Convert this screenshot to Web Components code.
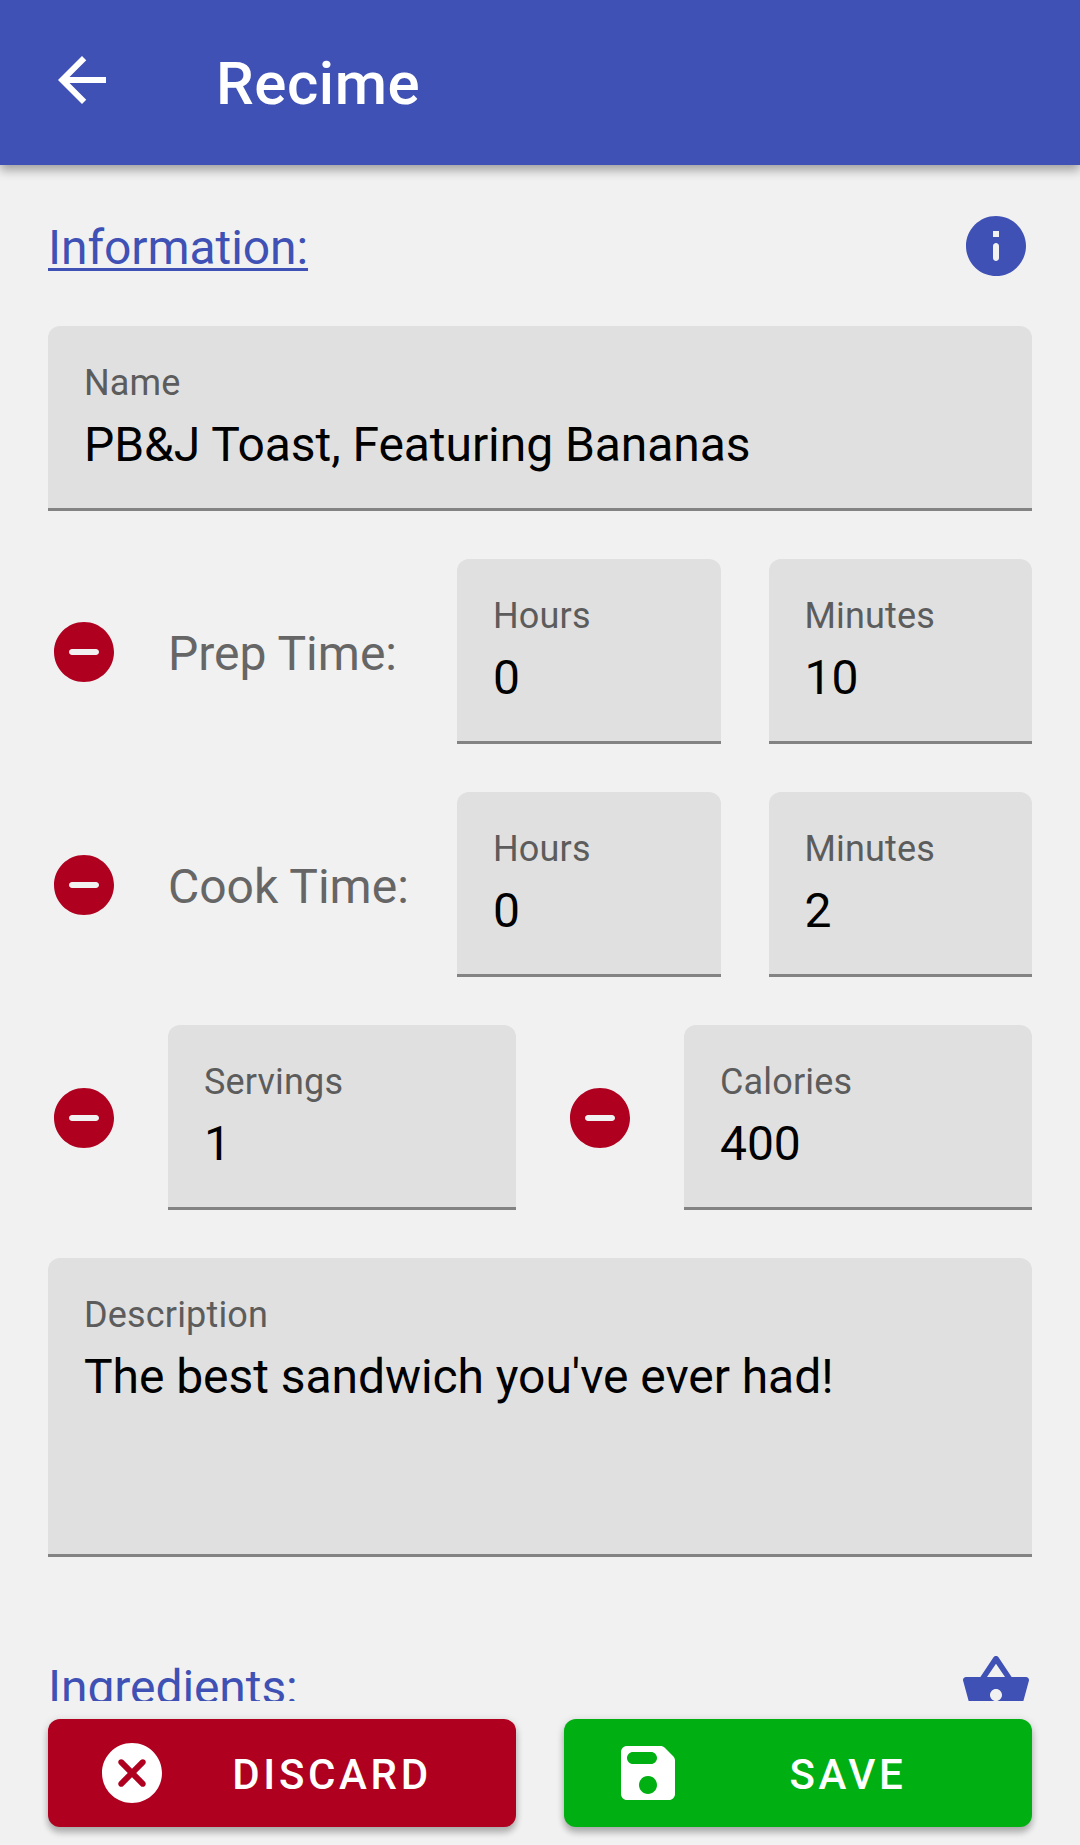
<!DOCTYPE html>
<html lang="en">
<head>
<meta charset="utf-8">
<title>Recime</title>
<style>
html,body{margin:0;height:100%}
body{font-family:Roboto,"Liberation Sans",sans-serif;background:#f1f1f1;overflow:hidden}
</style>
</head>
<body>
<recipe-editor></recipe-editor>
<script>
const define = (name, markup) => {
  const t = document.createElement('template');
  t.innerHTML = markup;
  customElements.define(name, class extends HTMLElement {
    constructor() {
      super();
      this.attachShadow({ mode: 'open' }).append(t.content.cloneNode(true));
    }
  });
};

const ICONS = {
  back: 'M20 11H7.83l5.59-5.59L12 4l-8 8 8 8 1.41-1.41L7.83 13H20v-2z',
  info: 'M12 2C6.48 2 2 6.48 2 12s4.48 10 10 10 10-4.48 10-10S17.52 2 12 2zm0 15c-.55 0-1-.45-1-1v-4c0-.55.45-1 1-1s1 .45 1 1v4c0 .55-.45 1-1 1zm1-8h-2V7h2v2z',
  minus: 'M12 2C6.48 2 2 6.48 2 12s4.48 10 10 10 10-4.48 10-10S17.52 2 12 2zm4 11H8c-.55 0-1-.45-1-1s.45-1 1-1h8c.55 0 1 .45 1 1s-.45 1-1 1z',
  cancel: 'M12 2C6.47 2 2 6.47 2 12s4.47 10 10 10 10-4.47 10-10S17.53 2 12 2zm4.3 14.3c-.39.39-1.02.39-1.41 0L12 13.41 9.11 16.3c-.39.39-1.02.39-1.41 0-.39-.39-.39-1.02 0-1.41L10.59 12 7.7 9.11c-.39-.39-.39-1.02 0-1.41.39-.39 1.02-.39 1.41 0L12 10.59l2.89-2.89c.39-.39 1.02-.39 1.41 0 .39.39.39 1.02 0 1.41L13.41 12l2.89 2.89c.38.38.38 1.02 0 1.41z',
  save: 'M17.59 3.59c-.38-.38-.89-.59-1.42-.59H5c-1.11 0-2 .9-2 2v14c0 1.1.9 2 2 2h14c1.1 0 2-.9 2-2V7.83c0-.53-.21-1.04-.59-1.41l-2.82-2.83zM12 19c-1.66 0-3-1.34-3-3s1.34-3 3-3 3 1.34 3 3-1.34 3-3 3zm1-10H7c-1.1 0-2-.9-2-2s.9-2 2-2h6c1.1 0 2 .9 2 2s-.9 2-2 2z',
  basket: 'M17.21 9l-4.38-6.56c-.19-.28-.51-.42-.83-.42-.32 0-.64.14-.83.43L6.79 9H2c-.55 0-1 .45-1 1 0 .09.01.18.04.27l2.54 9.27c.23.84 1 1.46 1.92 1.46h13c.92 0 1.69-.62 1.93-1.46l2.54-9.27L23 10c0-.55-.45-1-1-1h-4.79zM9 9l3-4.4L15 9H9zm3 8c-1.1 0-2-.9-2-2s.9-2 2-2 2 .9 2 2-.9 2-2 2z'
};

customElements.define('md-icon', class extends HTMLElement {
  constructor() {
    super();
    this.attachShadow({ mode: 'open' });
  }
  connectedCallback() {
    this.shadowRoot.innerHTML = `
      <style>:host{display:block;flex:none;width:72px;height:72px}svg{display:block}</style>
      <svg width="72" height="72" viewBox="0 0 24 24" fill="currentColor"><path d="${ICONS[this.getAttribute('name')]}"/></svg>`;
  }
});

define('app-bar', `
  <style>
    :host{display:flex;align-items:center;box-sizing:border-box;height:165px;flex:none;padding:0 46px 5px;gap:98px;
      background:#3f51b5;color:#fff;box-shadow:0 5px 10px rgba(0,0,0,.35);z-index:1}
    .title{font-size:60px;font-weight:500;line-height:70px;padding-top:7px;letter-spacing:.55px}
  </style>
  <md-icon name="back"></md-icon><div class="title"><slot></slot></div>`);

define('section-heading', `
  <style>
    :host{display:flex;justify-content:space-between;height:72px;color:#3f51b5}
    .text{font-size:48px;line-height:56px;padding-top:10px;letter-spacing:-.08px;text-decoration:underline;
      text-decoration-thickness:3px;text-underline-offset:4px;text-decoration-skip-ink:none}
  </style>
  <div class="text"><slot></slot></div><slot name="icon"></slot>`);

define('text-field', `
  <style>
    :host{display:flex;flex-direction:column;box-sizing:border-box;height:185px;min-width:0;flex:1;
      padding:36px 36px 0;background:#e0e0e0;border-bottom:3px solid #838383;border-radius:12px 12px 0 0;white-space:nowrap}
    .label{font-size:36px;line-height:42px;color:#5c5c5c;letter-spacing:.17px}
    .value{font-size:48px;line-height:56px;color:#000;margin-top:13px;letter-spacing:-.06px}
  </style>
  <div class="label"><slot name="label"></slot></div><div class="value"><slot></slot></div>`);

define('form-row', `
  <style>
    :host{display:flex;align-items:center;gap:48px}
    ::slotted(md-icon){color:#b00020}
  </style>
  <slot></slot>`);

define('row-label', `
  <style>
    :host{display:block;box-sizing:border-box;width:241px;flex:none;font-size:48px;line-height:56px;padding-top:4px;
      color:#666;white-space:nowrap}
  </style>
  <slot></slot>`);

define('action-button', `
  <style>
    :host{display:flex;align-items:center;box-sizing:border-box;flex:1;height:108px;padding:0 20px 0 48px;border-radius:12px;
      background:var(--fill);color:#fff;box-shadow:0 6px 6px rgba(0,0,0,.2),0 2px 8px rgba(0,0,0,.16)}
    .text{flex:1;text-align:center;font-size:42px;font-weight:500;line-height:50px;letter-spacing:3.65px;padding-top:4px}
  </style>
  <slot name="icon"></slot><div class="text"><slot></slot></div>`);

define('recipe-editor', `
  <style>
    :host{display:flex;flex-direction:column;height:1845px;width:1080px;background:#f1f1f1}
    main{flex:1;min-height:0;overflow:hidden;padding:45px 48px 0;box-sizing:border-box;display:flex;flex-direction:column}
    main > *{flex:none}
    .form{display:flex;flex-direction:column;gap:48px;padding:44px 0 93px}
    .form > text-field{flex:none}
    .form > .tall{height:299px}
    footer{display:flex;gap:48px;flex:none;height:144px;box-sizing:border-box;padding:18px 48px}
  </style>
  <app-bar>Recime</app-bar>
  <main>
    <section-heading>Information:<md-icon slot="icon" name="info"></md-icon></section-heading>
    <div class="form">
      <text-field><span slot="label">Name</span>PB&amp;J Toast, Featuring Bananas</text-field>
      <form-row>
        <md-icon name="minus"></md-icon><row-label>Prep Time:</row-label>
        <text-field><span slot="label">Hours</span>0</text-field>
        <text-field><span slot="label">Minutes</span>10</text-field>
      </form-row>
      <form-row>
        <md-icon name="minus"></md-icon><row-label>Cook Time:</row-label>
        <text-field><span slot="label">Hours</span>0</text-field>
        <text-field><span slot="label">Minutes</span>2</text-field>
      </form-row>
      <form-row>
        <md-icon name="minus"></md-icon>
        <text-field><span slot="label">Servings</span>1</text-field>
        <md-icon name="minus"></md-icon>
        <text-field><span slot="label">Calories</span>400</text-field>
      </form-row>
      <text-field class="tall"><span slot="label">Description</span>The best sandwich you've ever had!</text-field>
    </div>
    <section-heading>Ingredients:<md-icon slot="icon" name="basket"></md-icon></section-heading>
  </main>
  <footer>
    <action-button style="--fill:#b00020"><md-icon slot="icon" name="cancel"></md-icon>DISCARD</action-button>
    <action-button style="--fill:#00b012"><md-icon slot="icon" name="save"></md-icon>SAVE</action-button>
  </footer>`);
</script>
</body>
</html>
